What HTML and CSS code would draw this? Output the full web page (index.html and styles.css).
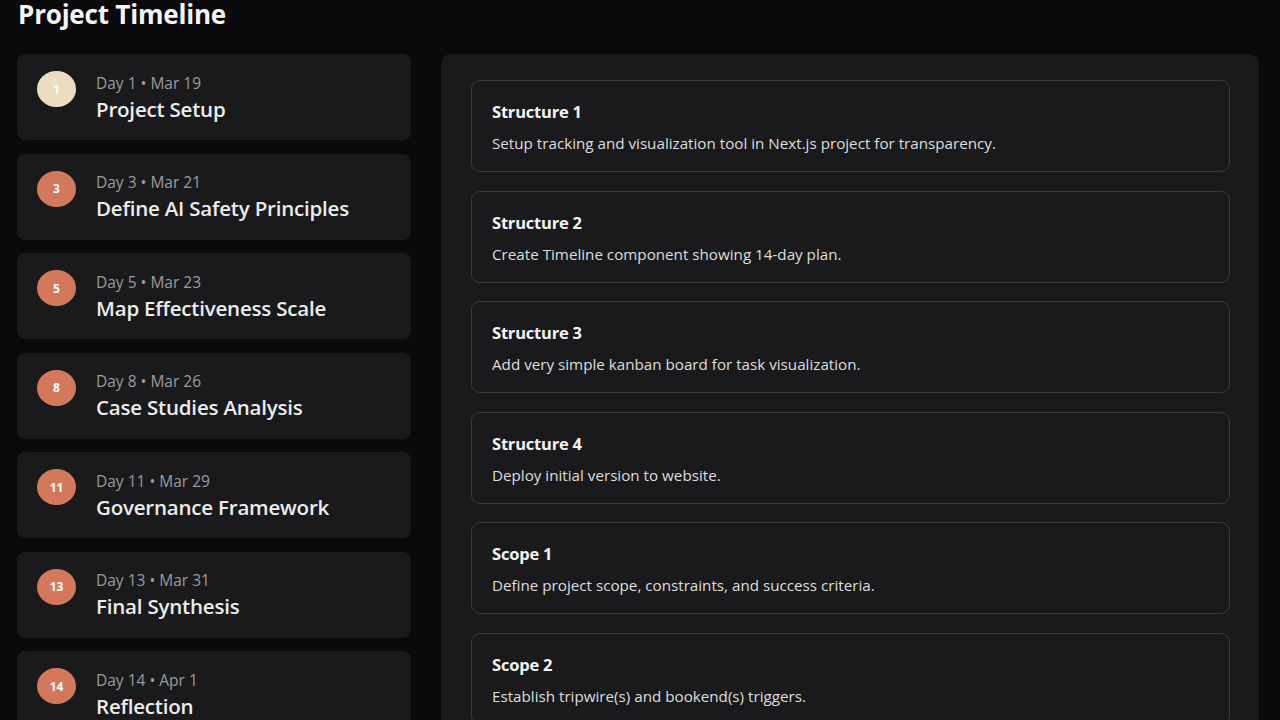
FILE: index.html
```html
<!DOCTYPE html>
<html lang="en">
<head>
<meta charset="utf-8">
<title>Project Timeline</title>
<link rel="stylesheet" href="styles.css">
</head>
<body>
<main class="page">
  <h1 class="page-title">Project Timeline</h1>
  <div class="layout">
    <ul class="days">
      <li class="day"><span class="badge badge-active">1</span><div class="day-text"><div class="day-meta">Day 1 • Mar 19</div><div class="day-title">Project Setup</div></div></li>
      <li class="day"><span class="badge">3</span><div class="day-text"><div class="day-meta">Day 3 • Mar 21</div><div class="day-title">Define AI Safety Principles</div></div></li>
      <li class="day"><span class="badge">5</span><div class="day-text"><div class="day-meta">Day 5 • Mar 23</div><div class="day-title">Map Effectiveness Scale</div></div></li>
      <li class="day"><span class="badge">8</span><div class="day-text"><div class="day-meta">Day 8 • Mar 26</div><div class="day-title">Case Studies Analysis</div></div></li>
      <li class="day"><span class="badge">11</span><div class="day-text"><div class="day-meta">Day 11 • Mar 29</div><div class="day-title">Governance Framework</div></div></li>
      <li class="day"><span class="badge">13</span><div class="day-text"><div class="day-meta">Day 13 • Mar 31</div><div class="day-title">Final Synthesis</div></div></li>
      <li class="day"><span class="badge">14</span><div class="day-text"><div class="day-meta">Day 14 • Apr 1</div><div class="day-title">Reflection</div></div></li>
    </ul>
    <section class="panel">
      <article class="task"><h3 class="task-title">Structure 1</h3><p class="task-desc">Setup tracking and visualization tool in Next.js project for transparency.</p></article>
      <article class="task"><h3 class="task-title">Structure 2</h3><p class="task-desc">Create Timeline component showing 14-day plan.</p></article>
      <article class="task"><h3 class="task-title">Structure 3</h3><p class="task-desc">Add very simple kanban board for task visualization.</p></article>
      <article class="task"><h3 class="task-title">Structure 4</h3><p class="task-desc">Deploy initial version to website.</p></article>
      <article class="task"><h3 class="task-title">Scope 1</h3><p class="task-desc">Define project scope, constraints, and success criteria.</p></article>
      <article class="task"><h3 class="task-title">Scope 2</h3><p class="task-desc">Establish tripwire(s) and bookend(s) triggers.</p></article>
    </section>
  </div>
</main>
</body>
</html>
```

FILE: styles.css
```css
* { box-sizing: border-box; }
html, body { margin: 0; padding: 0; }
body {
  background: #0a0a0c;
  color: #ececec;
  font-family: "Open Sans", "Noto Sans", "Liberation Sans", sans-serif;
  height: 720px;
  overflow: hidden;
}
.page {
  padding: 0 21px 0 17px;
}
.page-title {
  margin: 0 0 26px 1px;
  font-size: 26px;
  line-height: 28px;
  font-weight: 700;
  color: #f4f4f4;
  letter-spacing: -0.2px;
}
.layout {
  display: grid;
  grid-template-columns: 394px 1fr;
  column-gap: 30px;
  align-items: start;
}
.days {
  list-style: none;
  margin: 0;
  padding: 0;
  display: flex;
  flex-direction: column;
  gap: 13.5px;
}
.day {
  height: 86px;
  background: #1a1a1d;
  border-radius: 8px;
  display: flex;
  align-items: center;
  padding: 0 0 0 20px;
  gap: 20px;
}
.badge {
  flex: none;
  width: 39px;
  height: 36px;
  border-radius: 50%;
  background: #d4785c;
  color: #fff;
  font-size: 12px;
  font-weight: 700;
  display: flex;
  align-items: center;
  justify-content: center;
  margin-top: -16px;
}
.badge-active {
  background: #ebddbf;
  color: #fff;
}
.day-text {
  display: flex;
  flex-direction: column;
  gap: 3px;
}
.day-meta {
  font-size: 15.5px;
  line-height: 20px;
  color: #9c9c9f;
}
.day-title {
  font-size: 20.5px;
  line-height: 26px;
  font-weight: 600;
  color: #ececec;
  letter-spacing: -0.2px;
}
.panel {
  background: #1a1a1d;
  border-radius: 10px;
  padding: 26px 29px 26px 30px;
  display: flex;
  flex-direction: column;
  gap: 18.5px;
}
.task {
  height: 92px;
  border: 1px solid #3b3b3f;
  border-radius: 9px;
  padding: 20px 20px 0 20px;
  background: #1a1a1d;
}
.task-title {
  margin: 0;
  font-size: 16.5px;
  line-height: 22px;
  font-weight: 700;
  color: #f4f4f4;
  letter-spacing: -0.2px;
}
.task-desc {
  margin: 10px 0 0;
  font-size: 15.2px;
  line-height: 20px;
  color: #dedede;
}
```
